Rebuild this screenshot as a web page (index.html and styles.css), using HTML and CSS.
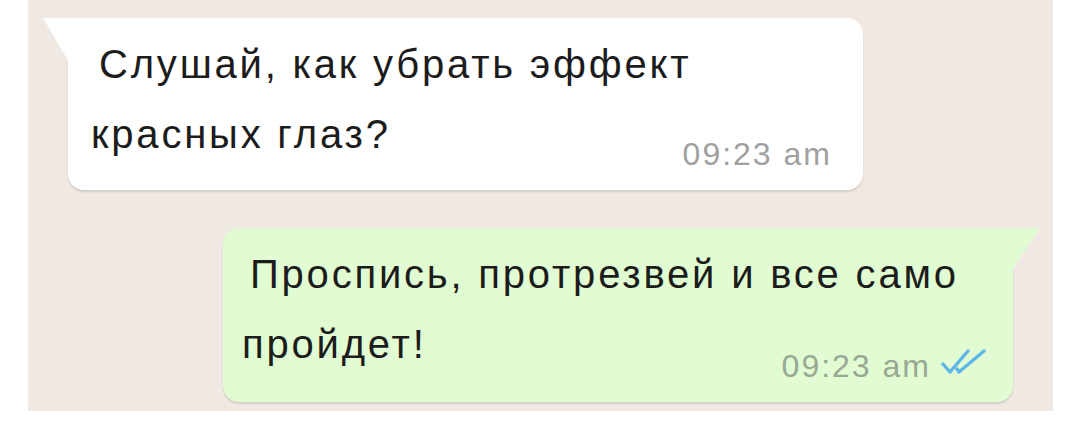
FILE: index.html
```html
<!DOCTYPE html>
<html lang="ru">
<head>
	<meta charset="UTF-8">
	<meta name="viewport" content="width=device-width, initial-scale=1.0">
	<title>Чат</title>
	<link rel="stylesheet" href="styles.css">
</head>
<body>
	<!-- Chat fragment -->
	<div class="chat">
		<div class="bubble incoming">
			<span class="text">Слушай, как убрать эффект красных глаз?</span><span class="meta">09:23 am</span>
		</div>

		<div class="bubble outgoing">
			<span class="text">Проспись, протрезвей и все само пройдет!</span><span class="meta">09:23 am<svg class="ticks" viewBox="0 0 46 28" width="46" height="28"><path d="M2 15 L9 23 L27 2" /><path d="M16 20 L18 23 L43 2" /></svg></span>
		</div>
	</div>
</body>
</html>
```

FILE: styles.css
```css
body {
	margin: 0;
	padding: 0;
	background-color: #ffffff;
	font-family: "Liberation Sans", Arial, sans-serif;
}

/* Wallpaper area */
.chat {
	margin-left: 28px;
	width: 1025px;
	height: 411px;
	box-sizing: border-box;
	padding-top: 18px;
	background-color: #f0e9e3;
	display: flex;
	flex-direction: column;
	gap: 38px;
}

/* Message bubbles */
.bubble {
	position: relative;
	display: flow-root;
	box-sizing: border-box;
	padding: 11px 31px 21px 23px;
	border-radius: 16px;
	box-shadow: 0 2px 2px rgba(0, 0, 0, 0.12);
	font-size: 40px;
	line-height: 70px;
	letter-spacing: 2.8px;
	text-indent: 8px;
	color: #1c1c1c;
}

/* Time sits on the last line, pushed down to the bubble bottom */
.bubble .meta {
	float: right;
	margin-top: 40px;
	font-size: 32px;
	line-height: 30px;
	letter-spacing: 2px;
	text-indent: 0;
	color: #a0a0a0;
}

.incoming {
	margin-left: 40px;
	width: 795px;
	background-color: #ffffff;
	border-top-left-radius: 0;
}

.outgoing {
	margin-left: 195px;
	width: 790px;
	padding-left: 19px;
	padding-right: 26px;
	background-color: #e1fbd2;
	border-top-right-radius: 0;
}

.outgoing .meta {
	color: #98a892;
}

/* Bubble tails */
.bubble::before {
	content: "";
	position: absolute;
	top: 0;
	width: 26px;
	height: 44px;
}

.incoming::before {
	left: -25px;
	background-color: #ffffff;
	clip-path: polygon(0 0, 100% 0, 100% 100%);
}

.outgoing::before {
	right: -27px;
	width: 28px;
	height: 42px;
	background-color: #e1fbd2;
	clip-path: polygon(0 0, 100% 0, 0 100%);
}

.ticks {
	margin-left: 10px;
	width: 46px;
	height: 28px;
	fill: none;
	stroke: #5db6e8;
	stroke-width: 3.4;
	stroke-linecap: round;
	stroke-linejoin: round;
}
```
